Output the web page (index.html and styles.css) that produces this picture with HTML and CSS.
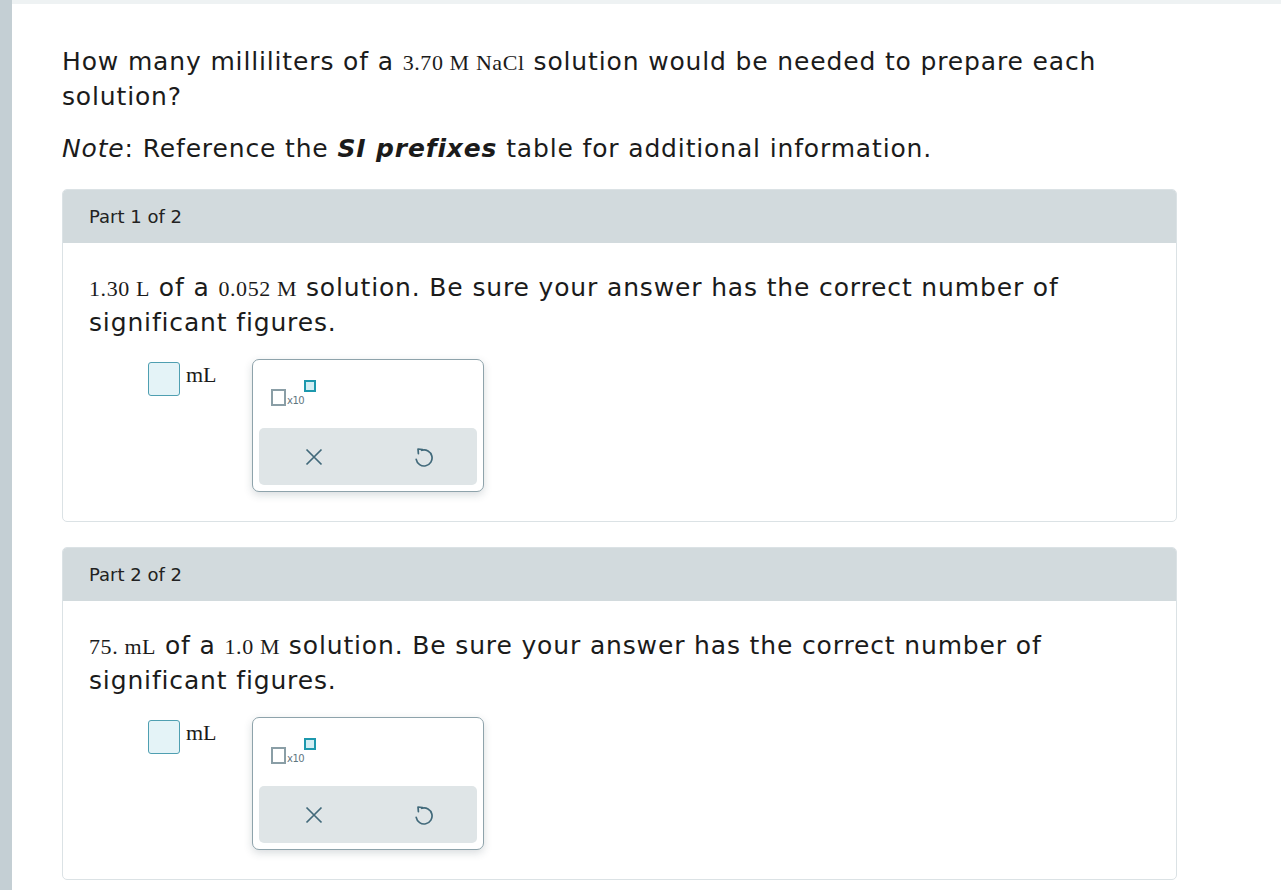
FILE: index.html
```html
<!DOCTYPE html>
<html>
<head>
<meta charset="utf-8">
<link rel="stylesheet" href="styles.css">
</head>
<body>
<div class="page">
  <div class="side"></div>
  <div class="main">
    <div class="topbar"></div>
    <div class="content">
      <p class="q">How many milliliters of a <span class="m">3.70 M NaCl</span> solution would be needed to prepare each solution?</p>
      <p class="q note"><i>Note</i>: Reference the <b><i>SI prefixes</i></b> table for additional information.</p>

      <div class="card">
        <div class="card-head">Part 1 of 2</div>
        <div class="card-body">
          <p class="q"><span class="m">1.30 L</span> of a <span class="m">0.052 M</span> solution. Be sure your answer has the correct number of significant figures.</p>
          <div class="answer">
            <div class="input-group">
              <div class="box"></div>
              <span class="unit">mL</span>
            </div>
            <div class="widget">
              <div class="tools">
                <div class="sci">
                  <span class="sq"></span><span class="x10">x10</span><span class="sup"></span>
                </div>
              </div>
              <div class="btnbar">
                <svg class="ico" viewBox="0 0 20 20" width="20" height="20"><path d="M2.5 2.5 L17.5 17.5 M17.5 2.5 L2.5 17.5" fill="none" stroke="#41697a" stroke-width="1.7"/></svg>
                <svg class="ico" viewBox="0 0 20 20" width="20" height="20"><path d="M3.2 12.4 A8 8 0 1 0 8.8 3.3" fill="none" stroke="#41697a" stroke-width="1.7" stroke-linecap="round"/><path d="M9.6 2.6 L5 2 L5.4 6.6" fill="none" stroke="#41697a" stroke-width="1.7" stroke-linecap="round" stroke-linejoin="round"/></svg>
              </div>
            </div>
          </div>
        </div>
      </div>

      <div class="card">
        <div class="card-head">Part 2 of 2</div>
        <div class="card-body">
          <p class="q"><span class="m">75. mL</span> of a <span class="m">1.0 M</span> solution. Be sure your answer has the correct number of significant figures.</p>
          <div class="answer">
            <div class="input-group">
              <div class="box"></div>
              <span class="unit">mL</span>
            </div>
            <div class="widget">
              <div class="tools">
                <div class="sci">
                  <span class="sq"></span><span class="x10">x10</span><span class="sup"></span>
                </div>
              </div>
              <div class="btnbar">
                <svg class="ico" viewBox="0 0 20 20" width="20" height="20"><path d="M2.5 2.5 L17.5 17.5 M17.5 2.5 L2.5 17.5" fill="none" stroke="#41697a" stroke-width="1.7"/></svg>
                <svg class="ico" viewBox="0 0 20 20" width="20" height="20"><path d="M3.2 12.4 A8 8 0 1 0 8.8 3.3" fill="none" stroke="#41697a" stroke-width="1.7" stroke-linecap="round"/><path d="M9.6 2.6 L5 2 L5.4 6.6" fill="none" stroke="#41697a" stroke-width="1.7" stroke-linecap="round" stroke-linejoin="round"/></svg>
              </div>
            </div>
          </div>
        </div>
      </div>
    </div>
  </div>
</div>
</body>
</html>
```

FILE: styles.css
```css
html, body {
  margin: 0;
  padding: 0;
  background: #ffffff;
}
body {
  font-family: "DejaVu Sans", Verdana, sans-serif;
  color: #1b1b1b;
}
.page {
  display: flex;
  min-height: 890px;
}
.side {
  width: 12px;
  flex: none;
  background: #c4cfd4;
}
.main {
  flex: 1;
}
.topbar {
  height: 4px;
  background: #eef2f3;
}
.content {
  padding: 40px 104px 0 50px;
}
.q {
  font-size: 25px;
  line-height: 35px;
  letter-spacing: 0.85px;
  margin: 0;
}
.note {
  margin-top: 17px;
}
.m {
  font-family: "Liberation Serif", "Times New Roman", serif;
  font-size: 22px;
  line-height: 20px;
  letter-spacing: 0.6px;
}
.card {
  border: 1px solid #dbe2e5;
  border-radius: 5px;
  margin-top: 23px;
  overflow: hidden;
}
.card + .card {
  margin-top: 25px;
}
.card-head {
  background: #d2dadd;
  height: 53px;
  padding-left: 26px;
  display: flex;
  align-items: center;
  font-size: 18px;
  color: #222;
}
.card-body {
  padding: 27px 26px 29px 26px;
}
.answer {
  display: flex;
  align-items: flex-start;
  margin-top: 19px;
  padding-left: 59px;
}
.input-group {
  width: 104px;
  display: flex;
  align-items: flex-start;
  padding-top: 3px;
}
.box {
  width: 30px;
  height: 32px;
  border: 1px solid #4f9fb1;
  border-radius: 3px;
  background: #e4f3f7;
}
.unit {
  font-family: "Liberation Serif", "Times New Roman", serif;
  font-size: 22px;
  margin-left: 6px;
  line-height: 32px;
  margin-top: -3px;
}
.widget {
  width: 232px;
  height: 133px;
  border: 1px solid #8ea3ab;
  border-radius: 7px;
  box-shadow: 0 3px 8px rgba(40, 60, 70, 0.18);
  box-sizing: border-box;
  padding: 0 6px 6px 6px;
  display: flex;
  flex-direction: column;
  background: #fff;
}
.tools {
  height: 68px;
  padding-left: 12px;
  padding-top: 20px;
  box-sizing: border-box;
}
.sci {
  position: relative;
  display: flex;
  align-items: flex-end;
  height: 26px;
}
.sq {
  border: 2px solid #8a9ea6;
  box-sizing: content-box;
  width: 11px;
  height: 13px;
}
.x10 {
  font-family: "DejaVu Sans", sans-serif;
  font-size: 10px;
  color: #5f7680;
  line-height: 10px;
  margin-left: 1px;
  letter-spacing: -0.5px;
}
.sup {
  position: absolute;
  left: 33px;
  top: 0;
  width: 8px;
  height: 8px;
  border: 2px solid #1d98ad;
  background: #d3eef3;
}
.btnbar {
  flex: 1;
  background: #dfe5e7;
  border-radius: 5px;
  display: flex;
  align-items: center;
  justify-content: space-around;
}
.ico {
  display: block;
}
```
